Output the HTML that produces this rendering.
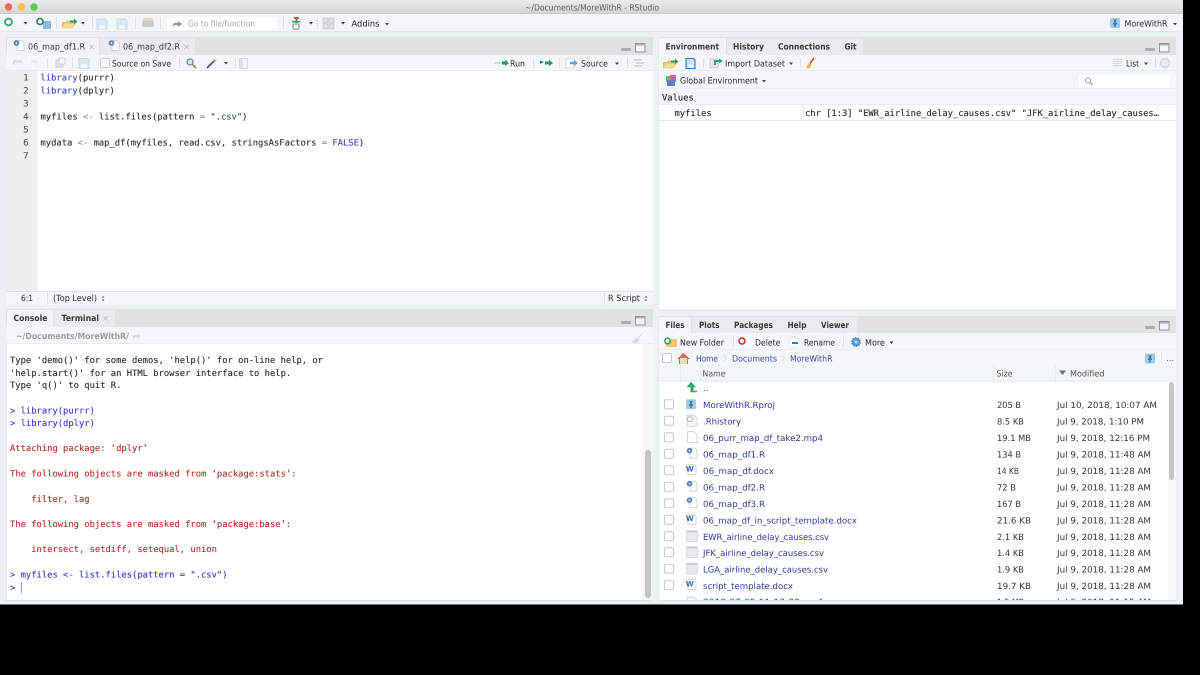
<!DOCTYPE html>
<html><head><meta charset="utf-8"><title>RStudio</title>
<style>
html,body{margin:0;padding:0;background:#000;width:1200px;height:675px;overflow:hidden}
svg{display:block;filter:blur(.35px)}
text{text-rendering:geometricPrecision;white-space:pre}
.s{font-family:"DejaVu Sans",sans-serif;font-size:8.6px;fill:#2c2c2c;stroke:currentColor;stroke-width:0}
.b{font-family:"DejaVu Sans",sans-serif;font-size:8.6px;font-weight:bold;fill:#3a3a3a}
.m{font-family:"DejaVu Sans Mono",monospace;font-size:8.82px;fill:#2a2a2a;stroke:#2a2a2a;stroke-width:.12px}
.m.k,.k{fill:#3a46c4}.g{fill:#9a9ea0}.m.r{fill:#b5302a;stroke:#b5302a}.m.u{fill:#3338c4;stroke:#3338c4}.s.f{fill:#2e3a9a}.s.d{fill:#333}
.sep{stroke:#dfe3e5;stroke-width:1}
</style></head><body>
<svg width="1200" height="675" viewBox="0 0 1200 675" xmlns="http://www.w3.org/2000/svg">
<defs>
<linearGradient id="tb" x1="0" y1="0" x2="0" y2="1"><stop offset="0" stop-color="#ebebeb"/><stop offset="1" stop-color="#d3d3d3"/></linearGradient>
<symbol id="car" overflow="visible"><path d="M-2 -1H2L0 1.500Z" fill="#444"/></symbol>
<symbol id="mm" overflow="visible"><rect x="0" y="5" width="10" height="3" rx="1" fill="#a9adb0"/><rect x="14.500" y="0.500" width="9.500" height="8.500" fill="#f3f6f7" stroke="#8f9396"/><rect x="15" y="1" width="9" height="1.500" fill="#a9adb0"/></symbol>
<symbol id="rf" overflow="visible"><path d="M1 -5.500H6L8 -3.500V4.500H1Z" fill="#fff" stroke="#c9cccf" stroke-width=".8"/><circle cx="0.500" cy="-3" r="2.800" fill="#5a82b8"/><circle cx="0.500" cy="-3" r="1" fill="#dde6f0"/></symbol>
<symbol id="wd" overflow="visible"><path d="M-3 -5.500H3L5 -3.500V4.500H-3Z" fill="#fff" stroke="#c9cccf" stroke-width=".8"/><text x="-5" y="1.500" font-family="Liberation Sans" font-size="8" font-weight="bold" fill="#1667b8">W</text></symbol>
<symbol id="cs" overflow="visible"><rect x="-5.500" y="-5.500" width="11" height="11" rx="1" fill="#e6e9ed" stroke="#cdd1d5" stroke-width=".7"/><rect x="-5.500" y="-5.500" width="11" height="1.500" fill="#c4c9ce"/></symbol>
<symbol id="cb" overflow="visible"><rect x="0.500" y="0.500" width="9" height="9" rx="1.500" fill="#fff" stroke="#c6c8ca"/></symbol>
<symbol id="proj" overflow="visible"><rect x="-5" y="-5" width="10" height="10" rx="1.500" fill="#9ccbea"/><path d="M-1.500 -3.500H1.500L.8 0H2V1.500H.8V4H-.8V1.500H-2V0H-.8Z" fill="#3f76a8"/></symbol>
<symbol id="disk" overflow="visible"><path d="M-5 -5H3.500L5 -3.500V5H-5Z" fill="#dbe8f2" stroke="#c6dbea"/><rect x="-2.500" y="1" width="5" height="4" fill="#f1f6fa"/></symbol>
<symbol id="diskb" overflow="visible"><path d="M-4.500 -5H3L4.500 -3.500V5H-4.500Z" fill="#cfe1f0" stroke="#3f86c6" stroke-width="1.200"/><rect x="-2.500" y="1" width="5" height="3.500" fill="#fff"/></symbol>
<symbol id="folder" overflow="visible"><path d="M-7 4.500V-2H-3L-2 -3.500H3V-2H5V1L4 4.500Z" fill="#e6c268"/><path d="M-7 4.500L-4.500 -.5H7L4 4.500Z" fill="#f3d98c"/><path d="M1 -3.500H5V-5.500L8.500 -2.500L5 .5V-1.500H1Z" fill="#2f9c63"/></symbol>
<symbol id="broom" overflow="visible"><path d="M-4 5L-1.500 0L2 2L-1 5.500Z" fill="#e4b84e"/><path d="M0 0.500L4 -5" stroke="#b5502e" stroke-width="1.500" fill="none"/></symbol>
</defs>

<!-- window -->
<rect x="0" y="0" width="1200" height="675" fill="#000"/>
<rect x="0" y="0" width="1183" height="605" rx="3" fill="#eef1f2"/>
<rect x="0" y="0" width="1183" height="14" fill="url(#tb)"/>
<rect x="0" y="13.500" width="1183" height=".8" fill="#c2c2c2"/>
<circle cx="8.500" cy="7" r="3.700" fill="#ee6a5e"/><circle cx="21.500" cy="7" r="3.700" fill="#f6bd4f"/><circle cx="34" cy="7" r="3.700" fill="#60c554"/>
<text class="s" x="525" y="10.500" textLength="134" lengthAdjust="spacingAndGlyphs" style="fill:#5e5e5e">~/Documents/MoreWithR - RStudio</text>

<!-- top toolbar -->
<rect x="0" y="14" width="1183" height="17" fill="#f3f7f8"/>
<rect x="0" y="31" width="1183" height="1" fill="#e3e6e8"/>
<circle cx="8.500" cy="22" r="3.400" fill="#fff" stroke="#2fa05f" stroke-width="1.800"/>
<use href="#car" x="25.500" y="23"/>
<rect x="43" y="21" width="8" height="8" rx="1" fill="#8cb9dc"/><circle cx="40" cy="21.500" r="3" fill="#fff" stroke="#2f8f6f" stroke-width="1.800"/>
<line class="sep" x1="56.500" y1="17" x2="56.500" y2="29"/>
<use href="#folder" x="69" y="24"/><use href="#car" x="83" y="23"/>
<line class="sep" x1="92.500" y1="17" x2="92.500" y2="29"/>
<use href="#disk" x="102" y="24"/><use href="#disk" x="122" y="24"/>
<line class="sep" x1="135.500" y1="17" x2="135.500" y2="29"/>
<rect x="143" y="18" width="10" height="4" fill="#e5d9b5"/><rect x="142" y="21" width="12" height="6" rx="1" fill="#c7ccd2"/>
<line class="sep" x1="160.500" y1="17" x2="160.500" y2="29"/>
<rect x="167" y="17" width="110" height="13" rx="1" fill="#fff"/>
<path d="M172 27L174 23H178V21L182 24L178 27V25H175Z" fill="#8b9198"/>
<text class="s" x="188" y="26.500" textLength="67" lengthAdjust="spacingAndGlyphs" style="fill:#a2a4a6">Go to file/function</text>
<line class="sep" x1="283.500" y1="17" x2="283.500" y2="29"/>
<rect x="294" y="17" width="5" height="2" fill="#d9534f"/><rect x="295.500" y="19" width="2" height="4" fill="#2fa05f"/><rect x="292" y="21" width="8" height="1.500" fill="#2fa05f"/><rect x="293" y="24" width="6" height="5" rx="1.500" fill="#fff" stroke="#888"/>
<use href="#car" x="311" y="23"/>
<line class="sep" x1="317.500" y1="17" x2="317.500" y2="29"/>
<g fill="#dde0e2" stroke="#c4c7ca" stroke-width=".7"><rect x="323" y="18" width="5" height="5"/><rect x="329" y="18" width="5" height="5"/><rect x="323" y="24" width="5" height="5"/><rect x="329" y="24" width="5" height="5"/></g>
<use href="#car" x="343" y="23"/>
<text class="s" x="351.500" y="26.500" textLength="28" lengthAdjust="spacingAndGlyphs" style="fill:#222;font-weight:500">Addins</text>
<use href="#car" x="387" y="24"/>
<use href="#proj" x="1115" y="23"/>
<text class="s" x="1124.500" y="26.500" textLength="43" lengthAdjust="spacingAndGlyphs">MoreWithR</text>
<use href="#car" x="1175" y="24"/>

<!-- SOURCE PANE -->
<rect x="6" y="37" width="647" height="268" fill="#f2f5f6"/>
<rect x="6" y="37" width="647" height="18" fill="#e2e2e2"/>
<rect x="7" y="38" width="92" height="17" fill="#f1f5f6"/>
<rect x="100" y="38" width="95" height="17" fill="#e9ebec"/>
<use href="#rf" x="16" y="46"/>
<text class="b" x="28" y="49.500" textLength="57" lengthAdjust="spacingAndGlyphs" style="font-weight:normal">06_map_df1.R</text>
<text class="s" x="88" y="49.500" style="fill:#b5b8ba">×</text>
<use href="#rf" x="111" y="46"/>
<text class="b" x="123" y="49.500" textLength="57" lengthAdjust="spacingAndGlyphs" style="font-weight:normal">06_map_df2.R</text>
<text class="s" x="183" y="49.500" style="fill:#b5b8ba">×</text>
<use href="#mm" x="621" y="43"/>

<rect x="6" y="55" width="647" height="16" fill="#f3f7f8"/>
<rect x="6" y="70.500" width="647" height="1" fill="#dde0e2"/>
<path d="M15 63H22V60L15 60V59L12 62.500L15 66V63" fill="#dbe0e3"/><path d="M31 60H38L38 63H31Z" fill="#e6eaec"/>
<line class="sep" x1="47.500" y1="58" x2="47.500" y2="68"/>
<rect x="56" y="60" width="7" height="7" fill="#e3e8ec" stroke="#bcc3c8" stroke-width=".7"/><rect x="59" y="58" width="6" height="6" fill="#f5f7f8" stroke="#c3c8cc" stroke-width=".7"/>
<line class="sep" x1="72.500" y1="58" x2="72.500" y2="68"/>
<use href="#disk" x="84" y="63.500"/>
<use href="#cb" x="100" y="58"/>
<text class="s" x="112" y="66.500" textLength="59" lengthAdjust="spacingAndGlyphs">Source on Save</text>
<line class="sep" x1="179.500" y1="58" x2="179.500" y2="68"/>
<circle cx="190" cy="62" r="3" fill="#dbe8f2" stroke="#5a7fa5" stroke-width="1.200"/><path d="M192.500 64.500L196 68" stroke="#a27a3c" stroke-width="1.600"/>
<path d="M207 68L214 61" stroke="#44566a" stroke-width="1.800"/><path d="M214 58L215 60L217 60.500L215 61.500L214 63" fill="#d9825a"/>
<use href="#car" x="226" y="63"/>
<line class="sep" x1="235.500" y1="58" x2="235.500" y2="68"/>
<rect x="239.500" y="58.500" width="8" height="10" rx="1" fill="#f3f5f6" stroke="#d4d8db"/><rect x="240" y="59" width="3" height="9" fill="#e2e5e8"/>
<path d="M494 63H503" stroke="#9ccbe6" stroke-width="1"/><path d="M502 61.500H505V59.800L509 63L505 66.200V64.500H502Z" fill="#2a9a5a"/>
<text class="s" x="510" y="66.500" textLength="15" lengthAdjust="spacingAndGlyphs">Run</text>
<line class="sep" x1="533.500" y1="58" x2="533.500" y2="68"/>
<path d="M540 60.500L544 62L540 64Z" fill="#2f6fb5"/><path d="M545 61.500H549V59.800L553 63L549 66.200V64.500H545Z" fill="#2a9a5a"/>
<line class="sep" x1="559.500" y1="58" x2="559.500" y2="68"/>
<rect x="566" y="59" width="8" height="9" fill="#fff" stroke="#d2d6d9" stroke-width=".8"/><path d="M570 61.800H574V59.800L578 63L574 66.200V64.200H570Z" fill="#5da6dd"/>
<text class="s" x="581" y="66.500" textLength="27" lengthAdjust="spacingAndGlyphs">Source</text>
<use href="#car" x="617" y="63.500"/>
<line class="sep" x1="627.500" y1="58" x2="627.500" y2="68"/>
<path d="M634 60H642M636 63H644M634 66H642" stroke="#c4c9cc" stroke-width="1.200"/>

<!-- editor -->
<rect x="6" y="71" width="647" height="220" fill="#fff"/>
<rect x="6" y="71" width="32" height="220" fill="#f0f0f0"/>
<g transform="translate(0,-.4)">
<g class="m" text-anchor="end" style="fill:#555;stroke:#555">
<text x="28.500" y="81">1</text><text x="28.500" y="94">2</text><text x="28.500" y="107">3</text><text x="28.500" y="120">4</text><text x="28.500" y="133">5</text><text x="28.500" y="146">6</text><text x="28.500" y="159">7</text></g>
<text class="m" x="40.500" y="81"><tspan fill="#3a46c4" stroke="#3a46c4">library</tspan>(purrr)</text>
<text class="m" x="40.500" y="94"><tspan fill="#3a46c4" stroke="#3a46c4">library</tspan>(dplyr)</text>
<text class="m" x="40.500" y="120">myfiles <tspan fill="#8a8a8a" stroke="#8a8a8a">&lt;-</tspan> list.files(pattern <tspan fill="#8a8a8a" stroke="#8a8a8a">=</tspan> <tspan fill="#1f6b2e" stroke="#1f6b2e">".csv"</tspan>)</text>
<text class="m" x="40.500" y="146">mydata <tspan fill="#8a8a8a" stroke="#8a8a8a">&lt;-</tspan> map_df(myfiles, read.csv, stringsAsFactors <tspan fill="#8a8a8a" stroke="#8a8a8a">=</tspan> <tspan fill="#3a46c4" stroke="#3a46c4">FALSE</tspan>)</text>
</g>

<!-- status -->
<rect x="6" y="291" width="647" height="14" fill="#f3f7f8"/>
<rect x="6" y="291" width="647" height="1" fill="#dfe2e4"/>
<text class="s" x="21" y="301" textLength="12" lengthAdjust="spacingAndGlyphs">6:1</text>
<line class="sep" x1="47.500" y1="292" x2="47.500" y2="305"/>
<text class="s" x="53" y="301" textLength="44" lengthAdjust="spacingAndGlyphs">(Top Level)</text>
<path d="M101.500 297.500L103 296L104.500 297.500ZM101.500 299.500L103 301L104.500 299.500Z" fill="#555"/>
<line class="sep" x1="604.500" y1="292" x2="604.500" y2="305"/>
<text class="s" x="608" y="301" textLength="32" lengthAdjust="spacingAndGlyphs">R Script</text>
<path d="M644.500 297.500L646 296L647.500 297.500ZM644.500 299.500L646 301L647.500 299.500Z" fill="#555"/>

<!-- CONSOLE PANE -->
<rect x="6" y="309" width="647" height="293" fill="#f2f5f6"/>
<rect x="6" y="309" width="647" height="18" fill="#e2e2e2"/>
<rect x="7" y="310" width="46" height="17" fill="#f1f5f6"/>
<rect x="54" y="310" width="61" height="17" fill="#e9ebec"/>
<text class="b" x="13.500" y="321" textLength="34" lengthAdjust="spacingAndGlyphs">Console</text>
<text class="b" x="61.500" y="321" textLength="37.500" lengthAdjust="spacingAndGlyphs">Terminal</text>
<text class="s" x="102" y="321" style="fill:#b5b8ba">×</text>
<use href="#mm" x="621" y="316"/>
<rect x="6" y="327" width="647" height="17" fill="#f3f7f8"/>
<rect x="6" y="343.500" width="647" height="1" fill="#e0e3e5"/>
<text class="b" x="16" y="338.800" textLength="113" lengthAdjust="spacingAndGlyphs" style="fill:#9ea1a4">~/Documents/MoreWithR/</text>
<path d="M133 335H137V333.500L141 336L137 338.500V337H135L133 339Z" fill="#d6dade"/>
<path d="M633 342L636 338L639 340L636 343ZM638 338L643 333" fill="#dadcde" stroke="#dadcde"/>
<rect x="6" y="344" width="647" height="258" fill="#fff"/>
<rect x="6" y="344" width="1" height="258" fill="#e8ebec"/>
<g transform="translate(0,-.8)">
<text class="m" x="10" y="364">Type 'demo()' for some demos, 'help()' for on-line help, or</text>
<text class="m" x="10" y="377">'help.start()' for an HTML browser interface to help.</text>
<text class="m" x="10" y="389">Type 'q()' to quit R.</text>
<text class="m u" x="10" y="414.500">&gt; library(purrr)</text>
<text class="m u" x="10" y="427">&gt; library(dplyr)</text>
<text class="m r" x="10" y="452">Attaching package: ‘dplyr’</text>
<text class="m r" x="10" y="477.500">The following objects are masked from ‘package:stats’:</text>
<text class="m r" x="10" y="503">    filter, lag</text>
<text class="m r" x="10" y="528">The following objects are masked from ‘package:base’:</text>
<text class="m r" x="10" y="553">    intersect, setdiff, setequal, union</text>
<text class="m u" x="10" y="578.500">&gt; myfiles &lt;- list.files(pattern = ".csv")</text>
<text class="m u" x="10" y="591.500">&gt;</text>
</g>
<rect x="21" y="582" width="1" height="11" fill="#8aa"/>
<rect x="643" y="344" width="10" height="258" fill="#f7f7f7"/>
<rect x="645" y="450" width="6" height="148" rx="3" fill="#c4c4c4"/>

<!-- ENV PANE -->
<rect x="658" y="37" width="519" height="273" fill="#fff"/>
<rect x="658" y="37" width="519" height="18" fill="#e2e2e2"/>
<rect x="659" y="38" width="67" height="17" fill="#f1f5f6"/>
<rect x="727" y="38" width="136" height="17" fill="#e9ebec"/>
<text class="b" x="665.500" y="49.500" textLength="53.500" lengthAdjust="spacingAndGlyphs">Environment</text>
<text class="b" x="733" y="49.500" textLength="31" lengthAdjust="spacingAndGlyphs">History</text>
<text class="b" x="778" y="49.500" textLength="52" lengthAdjust="spacingAndGlyphs">Connections</text>
<text class="b" x="844.500" y="49.500" textLength="12" lengthAdjust="spacingAndGlyphs">Git</text>
<use href="#mm" x="1145" y="43"/>
<rect x="658" y="55" width="519" height="16" fill="#f3f7f8"/>
<rect x="658" y="70.500" width="519" height="1" fill="#e0e3e5"/>
<use href="#folder" x="670" y="64"/><use href="#diskb" x="690.500" y="63.500"/>
<line class="sep" x1="703.500" y1="58" x2="703.500" y2="68"/>
<rect x="710" y="59" width="8" height="9" fill="#e6eaed" stroke="#c4c9cd" stroke-width=".7"/><path d="M714 60H719V58.500L723 61L719 63.500V62H716V65H714Z" fill="#3a9f73"/>
<text class="s" x="725" y="66.500" textLength="60" lengthAdjust="spacingAndGlyphs">Import Dataset</text>
<use href="#car" x="791" y="63.500"/>
<line class="sep" x1="800.500" y1="58" x2="800.500" y2="68"/>
<use href="#broom" x="810" y="63"/>
<path d="M1113 59.500H1122M1113 61.500H1122M1113 63.500H1122M1113 65.500H1122" stroke="#c8cccf" stroke-width=".8"/>
<text class="s" x="1126" y="66.500" textLength="13" lengthAdjust="spacingAndGlyphs">List</text>
<use href="#car" x="1146" y="63.500"/>
<line class="sep" x1="1155.500" y1="58" x2="1155.500" y2="68"/>
<circle cx="1165" cy="63" r="4.500" fill="#e8eef3" stroke="#ced9e3" stroke-width="1.400"/>

<rect x="658" y="71" width="519" height="18" fill="#f3f7f8"/>
<rect x="658" y="88.500" width="519" height="1" fill="#e3e6e8"/>
<rect x="666" y="76" width="6" height="6" fill="#7bb36b"/><rect x="670" y="75" width="6" height="7" fill="#c56a9e"/><rect x="667" y="80" width="8" height="6" fill="#6a7fc0"/>
<text class="s" x="680" y="83.500" textLength="78" lengthAdjust="spacingAndGlyphs">Global Environment</text>
<use href="#car" x="764" y="81"/>
<rect x="1079" y="75" width="91" height="13" rx="1" fill="#fff"/>
<circle cx="1088" cy="80.500" r="2.500" fill="none" stroke="#9fa3a6" stroke-width="1.100"/><path d="M1090 82.500L1092.500 85" stroke="#9fa3a6" stroke-width="1.200"/>
<rect x="658" y="89" width="519" height="16" fill="#f2f6f7"/>
<rect x="658" y="104.500" width="519" height="1" fill="#e1e4e6"/>
<text class="m" x="662" y="100.600" style="fill:#222">Values</text>
<rect x="659" y="105" width="518" height="15" fill="#fff"/>
<rect x="658" y="120" width="519" height="1" fill="#e6e8ea"/>
<line x1="803.500" y1="105" x2="803.500" y2="120" stroke="#e8eaec"/>
<text class="m" x="674.500" y="116">myfiles</text>
<text class="m" x="805" y="116" textLength="354">chr [1:3] "EWR_airline_delay_causes.csv" "JFK_airline_delay_causes…</text>
<rect x="658" y="37" width="1" height="273" fill="#e8ebec"/><rect x="1176" y="37" width="1" height="273" fill="#e8ebec"/><rect x="658" y="309.500" width="519" height="1" fill="#e0e3e5"/>

<!-- FILES PANE -->
<rect x="658" y="316" width="519" height="286" fill="#fff"/>
<rect x="658" y="316" width="519" height="17" fill="#e2e2e2"/>
<rect x="659" y="317" width="32" height="16" fill="#f1f5f6"/>
<rect x="692" y="317" width="165" height="16" fill="#e9ebec"/>
<text class="b" x="665.500" y="328" textLength="19" lengthAdjust="spacingAndGlyphs">Files</text>
<text class="b" x="699" y="328" textLength="20.500" lengthAdjust="spacingAndGlyphs">Plots</text>
<text class="b" x="734" y="328" textLength="39" lengthAdjust="spacingAndGlyphs">Packages</text>
<text class="b" x="787.500" y="328" textLength="19" lengthAdjust="spacingAndGlyphs">Help</text>
<text class="b" x="821" y="328" textLength="28" lengthAdjust="spacingAndGlyphs">Viewer</text>
<use href="#mm" x="1145" y="321"/>
<rect x="658" y="333" width="519" height="17" fill="#f3f7f8"/>
<rect x="658" y="349.500" width="519" height="1" fill="#e3e6e8"/>
<rect x="666" y="339" width="11" height="8" rx="1" fill="#ecc96c"/><circle cx="667.500" cy="341" r="2.700" fill="#fff" stroke="#2fa05f" stroke-width="1.500"/>
<text class="s" x="680" y="345.500" textLength="44" lengthAdjust="spacingAndGlyphs">New Folder</text>
<line class="sep" x1="733.500" y1="336" x2="733.500" y2="347"/>
<circle cx="742" cy="341" r="3" fill="#fff" stroke="#c9413a" stroke-width="1.700"/>
<text class="s" x="755" y="345.500" textLength="25.500" lengthAdjust="spacingAndGlyphs">Delete</text>
<rect x="790" y="339" width="9" height="8" fill="#fff" stroke="#e4e6e8" stroke-width=".6"/><rect x="792" y="342" width="6" height="2" fill="#2a7ec2"/>
<text class="s" x="804" y="345.500" textLength="31" lengthAdjust="spacingAndGlyphs">Rename</text>
<line class="sep" x1="843.500" y1="336" x2="843.500" y2="347"/>
<circle cx="856" cy="342" r="4" fill="#5a9bd0" stroke="#4a87b9" stroke-dasharray="1.500 1" stroke-width="2"/><circle cx="856" cy="342" r="1.500" fill="#c4dff2"/>
<text class="s" x="865" y="345.500" textLength="20" lengthAdjust="spacingAndGlyphs">More</text>
<use href="#car" x="891.500" y="342.500"/>
<rect x="658" y="350" width="519" height="16" fill="#f3f7f8"/>
<rect x="662.500" y="353.500" width="9" height="9" rx="1.500" fill="#fff" stroke="#c6c8ca"/>
<path d="M677 359L683.500 353L690 359H688V364H679V359Z" fill="#d9694f"/><rect x="680" y="358" width="7" height="6" fill="#e9dcc5"/>
<text class="s" x="696" y="361.500" textLength="22" lengthAdjust="spacingAndGlyphs" style="fill:#3b4aa6">Home</text>
<path d="M724 355L726.500 358L724 361" stroke="#dcdfe1" fill="none"/>
<text class="s" x="732" y="361.500" textLength="45" lengthAdjust="spacingAndGlyphs" style="fill:#3b4aa6">Documents</text>
<path d="M782 355L784.500 358L782 361" stroke="#dcdfe1" fill="none"/>
<text class="s" x="790" y="361.500" textLength="42.500" lengthAdjust="spacingAndGlyphs" style="fill:#3b4aa6">MoreWithR</text>
<use href="#proj" x="1150" y="358.500"/>
<line class="sep" x1="1161.500" y1="352" x2="1161.500" y2="364"/>
<text class="s" x="1166" y="361" style="fill:#555">...</text>
<rect x="658" y="366" width="519" height="15" fill="#f3f6f7"/>
<rect x="658" y="380.500" width="519" height="1" fill="#e4e7e9"/>
<line x1="680.500" y1="366" x2="680.500" y2="381" stroke="#e6e9ea"/><line x1="700.500" y1="366" x2="700.500" y2="381" stroke="#e6e9ea"/>
<line x1="993.500" y1="366" x2="993.500" y2="381" stroke="#e6e9ea"/><line x1="1055.500" y1="366" x2="1055.500" y2="381" stroke="#e6e9ea"/>
<text class="s" x="702.500" y="376.500" textLength="23" lengthAdjust="spacingAndGlyphs" style="fill:#555">Name</text>
<text class="s" x="996.500" y="376.500" textLength="16" lengthAdjust="spacingAndGlyphs" style="fill:#555">Size</text>
<path d="M1059 370.500H1066L1062.500 375Z" fill="#6f7275"/>
<text class="s" x="1070" y="376.500" textLength="34.500" lengthAdjust="spacingAndGlyphs" style="fill:#555">Modified</text>

<!-- rows -->
<g transform="translate(0,-.8)">
<path d="M691 382.500L696 388H693.500V391.500H697V393H690.500V388H686.500Z" fill="#2fa36b"/>
<text class="s f" x="703" y="392">..</text>

<use href="#cb" x="664" y="400"/><use href="#proj" x="691" y="405"/>
<text class="s f" x="703" y="409" textLength="72" lengthAdjust="spacingAndGlyphs">MoreWithR.Rproj</text>
<text class="s d" x="997" y="409" textLength="24" lengthAdjust="spacingAndGlyphs">205 B</text>
<text class="s d" x="1057" y="409" textLength="100" lengthAdjust="spacingAndGlyphs">Jul 10, 2018, 10:07 AM</text>

<use href="#cb" x="664" y="416.500"/>
<path d="M687 416H694L697 419V427H687Z" fill="#fafafa" stroke="#c9cccf" stroke-width=".8"/><circle cx="690" cy="420" r="2.500" fill="#fff" stroke="#a8acb0"/>
<text class="s f" x="703" y="425.500" textLength="38" lengthAdjust="spacingAndGlyphs">.Rhistory</text>
<text class="s d" x="997" y="425.500" textLength="27" lengthAdjust="spacingAndGlyphs">8.5 KB</text>
<text class="s d" x="1057" y="425.500" textLength="87" lengthAdjust="spacingAndGlyphs">Jul 9, 2018, 1:10 PM</text>

<use href="#cb" x="664" y="433"/>
<path d="M687.500 432.500H694L697 435.500V443.500H687.500Z" fill="#fff" stroke="#c9cccf" stroke-width=".8"/>
<text class="s f" x="703" y="442" textLength="120" lengthAdjust="spacingAndGlyphs">06_purr_map_df_take2.mp4</text>
<text class="s d" x="997" y="442" textLength="34" lengthAdjust="spacingAndGlyphs">19.1 MB</text>
<text class="s d" x="1057" y="442" textLength="93" lengthAdjust="spacingAndGlyphs">Jul 9, 2018, 12:16 PM</text>

<use href="#cb" x="664" y="449.500"/><use href="#rf" x="689" y="454.500"/>
<text class="s f" x="703" y="458.500" textLength="62" lengthAdjust="spacingAndGlyphs">06_map_df1.R</text>
<text class="s d" x="997" y="458.500" textLength="24" lengthAdjust="spacingAndGlyphs">134 B</text>
<text class="s d" x="1057" y="458.500" textLength="94" lengthAdjust="spacingAndGlyphs">Jul 9, 2018, 11:48 AM</text>

<use href="#cb" x="664" y="466"/><use href="#wd" x="691" y="471"/>
<text class="s f" x="703" y="475" textLength="71" lengthAdjust="spacingAndGlyphs">06_map_df.docx</text>
<text class="s d" x="997" y="475" textLength="22" lengthAdjust="spacingAndGlyphs">14 KB</text>
<text class="s d" x="1057" y="475" textLength="94" lengthAdjust="spacingAndGlyphs">Jul 9, 2018, 11:28 AM</text>

<use href="#cb" x="664" y="482.500"/><use href="#rf" x="689" y="487.500"/>
<text class="s f" x="703" y="491.500" textLength="62" lengthAdjust="spacingAndGlyphs">06_map_df2.R</text>
<text class="s d" x="997" y="491.500" textLength="19" lengthAdjust="spacingAndGlyphs">72 B</text>
<text class="s d" x="1057" y="491.500" textLength="94" lengthAdjust="spacingAndGlyphs">Jul 9, 2018, 11:28 AM</text>

<use href="#cb" x="664" y="499"/><use href="#rf" x="689" y="504"/>
<text class="s f" x="703" y="508" textLength="62" lengthAdjust="spacingAndGlyphs">06_map_df3.R</text>
<text class="s d" x="997" y="508" textLength="24" lengthAdjust="spacingAndGlyphs">167 B</text>
<text class="s d" x="1057" y="508" textLength="94" lengthAdjust="spacingAndGlyphs">Jul 9, 2018, 11:28 AM</text>

<use href="#cb" x="664" y="515.500"/><use href="#wd" x="691" y="520.500"/>
<text class="s f" x="703" y="524.500" textLength="154" lengthAdjust="spacingAndGlyphs">06_map_df_in_script_template.docx</text>
<text class="s d" x="997" y="524.500" textLength="34" lengthAdjust="spacingAndGlyphs">21.6 KB</text>
<text class="s d" x="1057" y="524.500" textLength="94" lengthAdjust="spacingAndGlyphs">Jul 9, 2018, 11:28 AM</text>

<use href="#cb" x="664" y="532"/><use href="#cs" x="692" y="537"/>
<text class="s f" x="703" y="541" textLength="126" lengthAdjust="spacingAndGlyphs">EWR_airline_delay_causes.csv</text>
<text class="s d" x="997" y="541" textLength="27" lengthAdjust="spacingAndGlyphs">2.1 KB</text>
<text class="s d" x="1057" y="541" textLength="94" lengthAdjust="spacingAndGlyphs">Jul 9, 2018, 11:28 AM</text>

<use href="#cb" x="664" y="548"/><use href="#cs" x="692" y="553"/>
<text class="s f" x="703" y="557" textLength="121" lengthAdjust="spacingAndGlyphs">JFK_airline_delay_causes.csv</text>
<text class="s d" x="997" y="557" textLength="27" lengthAdjust="spacingAndGlyphs">1.4 KB</text>
<text class="s d" x="1057" y="557" textLength="94" lengthAdjust="spacingAndGlyphs">Jul 9, 2018, 11:28 AM</text>

<use href="#cb" x="664" y="564.500"/><use href="#cs" x="692" y="569.500"/>
<text class="s f" x="703" y="573.500" textLength="125" lengthAdjust="spacingAndGlyphs">LGA_airline_delay_causes.csv</text>
<text class="s d" x="997" y="573.500" textLength="27" lengthAdjust="spacingAndGlyphs">1.9 KB</text>
<text class="s d" x="1057" y="573.500" textLength="94" lengthAdjust="spacingAndGlyphs">Jul 9, 2018, 11:28 AM</text>

<use href="#cb" x="664" y="581"/><use href="#wd" x="691" y="586"/>
<text class="s f" x="703" y="590" textLength="90" lengthAdjust="spacingAndGlyphs">script_template.docx</text>
<text class="s d" x="997" y="590" textLength="34" lengthAdjust="spacingAndGlyphs">19.7 KB</text>
<text class="s d" x="1057" y="590" textLength="94" lengthAdjust="spacingAndGlyphs">Jul 9, 2018, 11:28 AM</text>

<path d="M687.500 598H694L697 601V606H687.500Z" fill="#fff" stroke="#c9cccf" stroke-width=".8"/>
<text class="s f" x="703" y="606" textLength="120" lengthAdjust="spacingAndGlyphs">2018-07-09-11-13-22.mp4</text>
<text class="s d" x="997" y="606" textLength="27" lengthAdjust="spacingAndGlyphs">1.5 MB</text>
<text class="s d" x="1057" y="606" textLength="94" lengthAdjust="spacingAndGlyphs">Jul 9, 2018, 11:15 AM</text>
</g>

<rect x="1168" y="381" width="9" height="221" fill="#f8f8f8"/>
<rect x="1169" y="382" width="5" height="98" rx="2.500" fill="#c6c6c6"/>
<rect x="658" y="316" width="1" height="286" fill="#e8ebec"/><rect x="1176" y="316" width="1" height="286" fill="#e8ebec"/>

<!-- bottom mask -->
<rect x="0" y="600" width="1183" height="5" fill="#eef1f2"/>
<rect x="6" y="600" width="647" height="1" fill="#e0e3e5"/><rect x="658" y="600" width="519" height="1" fill="#e0e3e5"/>
<rect x="0" y="604.500" width="1200" height="70.500" fill="#000"/>
<rect x="1183" y="0" width="17" height="675" fill="#000"/>
</svg>
</body></html>
